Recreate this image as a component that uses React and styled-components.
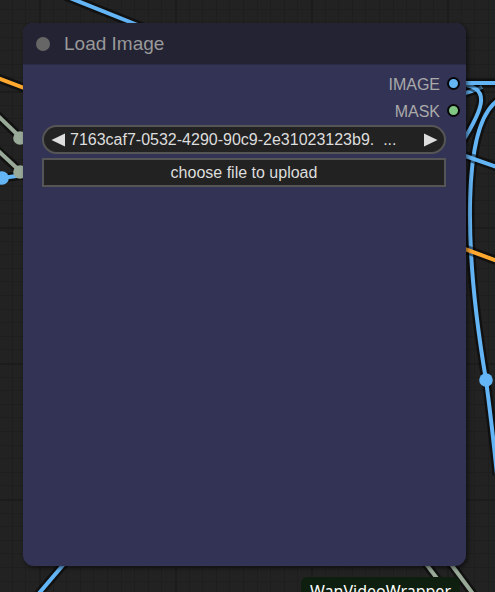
import React from "react";
import styled, { createGlobalStyle } from "styled-components";

const GlobalStyle = createGlobalStyle`
  * { box-sizing: border-box; }
  body {
    margin: 0;
    background: #222222;
    font-family: "Liberation Sans", Arial, sans-serif;
  }
`;

const Canvas = styled.main`
  position: relative;
  display: flex;
  flex-direction: column;
  height: 100vh;
  padding: 23px 29px 0 23px;
  overflow: hidden;
`;

const Backdrop = styled.svg`
  position: absolute;
  inset: 0;
  width: 100%;
  height: 100%;
`;

const Node = styled.section`
  position: relative;
  flex: none;
  display: flex;
  flex-direction: column;
  min-height: calc(100vh - 49px);
  border-radius: 11px;
  background: #333355;
  box-shadow: 2px 2px 4px rgba(0, 0, 0, 0.5);
`;

const TitleBar = styled.header`
  display: flex;
  align-items: center;
  gap: 14px;
  height: 42px;
  padding: 0 13px;
  border-radius: 11px 11px 0 0;
  border-bottom: 1px solid #2b2b45;
  background: #232333;
`;

const CollapseButton = styled.button`
  width: 14px;
  height: 14px;
  padding: 0;
  border: 0;
  border-radius: 50%;
  background: #666666;
`;

const Title = styled.h1`
  margin: 0;
  color: #999999;
  font-size: 19px;
  font-weight: 400;
  line-height: 24px;
`;

const Outputs = styled.ul`
  display: flex;
  flex-direction: column;
  margin: 0;
  padding: 5px 6px 1px;
  list-style: none;
`;

const Output = styled.li`
  display: flex;
  align-items: center;
  justify-content: flex-end;
  gap: 7px;
  height: 27px;
  color: #aaaaaa;
  font-size: 16px;
  line-height: 20px;
`;

const OutputName = styled.span`
  padding-top: 2px;
`;

const Port = styled.span`
  width: 13px;
  height: 13px;
  border: 2px solid #060608;
  border-radius: 50%;
  background: ${({ $color }) => $color};
`;

const Widgets = styled.div`
  display: flex;
  flex-direction: column;
  gap: 4px;
  padding: 0 20px 0 19px;
`;

const Combo = styled.div`
  display: flex;
  align-items: center;
  height: 29px;
  padding: 0 6px 0 7px;
  border: 2px solid #555555;
  border-radius: 15px;
  background: #222222;
`;

const StepButton = styled.button`
  display: flex;
  flex: none;
  padding: 0;
  border: 0;
  background: none;
`;

const Choice = styled.select`
  flex: 1;
  min-width: 0;
  height: 24px;
  padding: 0 5px;
  border: 0;
  outline: 0;
  appearance: none;
  background: transparent;
  color: #dddddd;
  font: 16px/24px "Liberation Sans", Arial, sans-serif;
`;

const UploadButton = styled.button`
  height: 29px;
  padding: 0;
  border: 2px solid #555555;
  background: #222222;
  color: #dddddd;
  font: 16px/24px "Liberation Sans", Arial, sans-serif;
`;

const PackBadge = styled.div`
  position: relative;
  flex: none;
  align-self: flex-end;
  margin: 11px 6px 0 0;
  padding: 3px 9px;
  border-radius: 6px;
  background: #0f1f0f;
  color: #ffffff;
  font: 16px/22px "Noto Sans", sans-serif;
`;

const BLUE = "#64b5f6";
const ORANGE = "#ffa931";
const SAGE = "#99aa99";
const MINOR = [14, 27, 41, 54, 68, 82, 95, 109, 122];

const LINKS = [
  { d: "M60 -6 L160 34", color: BLUE },
  { d: "M-5 77 L40 94", color: ORANGE },
  { d: "M2 178 L24 175", color: BLUE },
  { d: "M-6 112 L20 137", color: SAGE },
  { d: "M-6 147 L20 171", color: SAGE },
  { d: "M455 96 C470 92 476 90 482 87", color: BLUE },
  { d: "M454 84 C494 84 484 108 461 144", color: BLUE },
  { d: "M454 83 H500", color: BLUE },
  { d: "M500 99 C461 121 464 250 486 380 C490 410 494 445 497 475", color: BLUE },
  { d: "M454 152 L500 168", color: BLUE },
  { d: "M454 245 L500 262", color: ORANGE },
  { d: "M69 558 L35 598", color: BLUE },
  { d: "M420 556 L455 602", color: SAGE },
  { d: "M445 556 L479 602", color: SAGE },
];

const JOINTS = [
  { x: 2, y: 178, color: BLUE },
  { x: 20, y: 138, color: SAGE },
  { x: 20, y: 172, color: SAGE },
  { x: 486, y: 380, color: BLUE },
];

const OUTPUTS = [
  { name: "IMAGE", color: BLUE },
  { name: "MASK", color: "#81c784" },
];

function Graph() {
  return (
    <Backdrop aria-hidden="true">
      <defs>
        <pattern id="grid" x="39" y="91" width="136" height="136" patternUnits="userSpaceOnUse">
          {MINOR.map((p) => (
            <path key={p} d={`M${p} 0h1v136h-1z M0 ${p}h136v1h-136z`} fill="#1e1e1e" />
          ))}
          <path d="M0 0h2v136h-2z M0 0h136v2h-136z" fill="#1c1c1c" />
        </pattern>
      </defs>
      <rect width="100%" height="100%" fill="url(#grid)" />
      {LINKS.map(({ d, color }) => (
        <g key={d} fill="none">
          <path d={d} stroke="#000000" strokeOpacity="0.5" strokeWidth="9" />
          <path d={d} stroke={color} strokeWidth="4" />
        </g>
      ))}
      {JOINTS.map(({ x, y, color }) => (
        <circle key={`${x}-${y}`} cx={x} cy={y} r="6.8" fill={color} />
      ))}
    </Backdrop>
  );
}

export default function App() {
  return (
    <>
      <GlobalStyle />
      <Canvas>
        <Graph />
        <Node>
          <TitleBar>
            <CollapseButton type="button" aria-label="Collapse node" />
            <Title>Load Image</Title>
          </TitleBar>
          <Outputs>
            {OUTPUTS.map(({ name, color }) => (
              <Output key={name}>
                <OutputName>{name}</OutputName>
                <Port $color={color} />
              </Output>
            ))}
          </Outputs>
          <Widgets>
            <Combo>
              <StepButton type="button" aria-label="Previous image">
                <svg width="14" height="14" viewBox="0 0 14 14">
                  <path d="M14 0.5V13.5L0.5 7Z" fill="#dddddd" />
                </svg>
              </StepButton>
              <Choice aria-label="Image file">
                <option>{"7163caf7-0532-4290-90c9-2e31023123b9.\u00a0\u00a0..."}</option>
              </Choice>
              <StepButton type="button" aria-label="Next image">
                <svg width="14" height="14" viewBox="0 0 14 14">
                  <path d="M0 0.5V13.5L13.5 7Z" fill="#dddddd" />
                </svg>
              </StepButton>
            </Combo>
            <UploadButton type="button">choose file to upload</UploadButton>
          </Widgets>
        </Node>
        <PackBadge>WanVideoWrapper</PackBadge>
      </Canvas>
    </>
  );
}
